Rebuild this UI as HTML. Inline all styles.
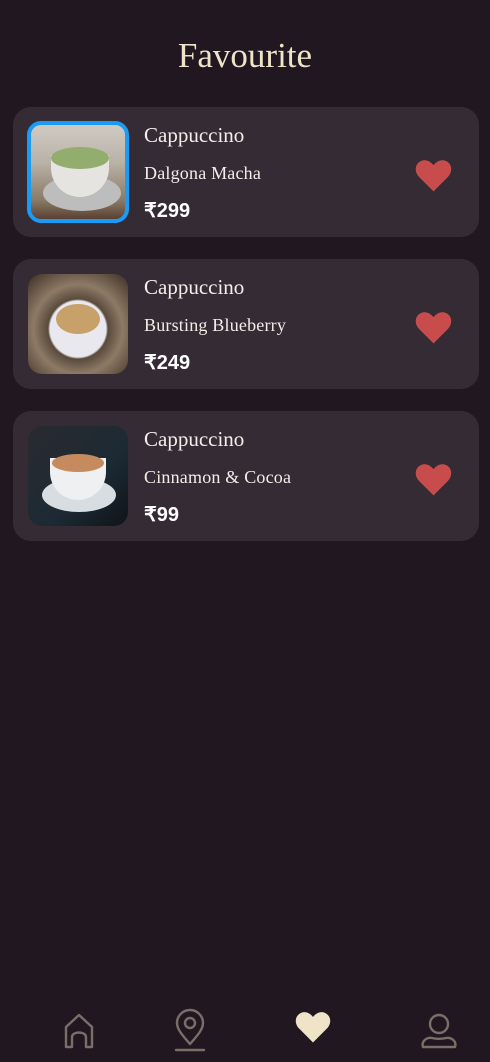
<!DOCTYPE html>
<html><head><meta charset="utf-8"><style>
body{margin:0;width:490px;height:1062px;background:#211720;position:relative;overflow:hidden;font-family:"Liberation Serif",serif}
h1{position:absolute;top:36px;left:0;width:490px;text-align:center;margin:0;font-weight:normal;font-size:35px;color:#efe3c8}
.card{position:absolute;left:13px;width:466px;height:130px;background:#352b34;border-radius:18px}
.img{position:absolute;left:15px;top:15px;width:100px;height:100px;border-radius:14px;overflow:hidden}
.t{position:absolute;left:131px;top:16px;color:#f4eee8;font-size:21px}
.s{position:absolute;left:131px;top:56px;color:#f4eee8;font-size:18px;letter-spacing:0.2px}
.p{position:absolute;left:131px;top:91px;color:#fff;font-size:20px;font-weight:bold;font-family:"Liberation Sans",sans-serif}
.h{position:absolute;left:401px;top:51px}
</style></head><body>
<h1>Favourite</h1>
<div class="card" style="top:107px">
 <div class="img" style="border:4px solid #1a9bf5;left:14px;top:14px;width:94px;height:94px;background:linear-gradient(#cfcac3,#b9b2a7 40%,#8a7a68 80%,#5a4030)">
  <div style="position:absolute;left:12px;top:50px;width:78px;height:36px;border-radius:50%;background:#bdbdbd"></div>
  <div style="position:absolute;left:20px;top:30px;width:58px;height:42px;border-radius:0 0 30px 30px;background:#e6e4e0"></div>
  <div style="position:absolute;left:20px;top:22px;width:58px;height:22px;border-radius:50%;background:#93ad6e"></div>
 </div>
 <div class="t">Cappuccino</div><div class="s">Dalgona Macha</div><div class="p">₹299</div>
 <svg class="h" width="39" height="35" viewBox="0 0 24 22"><path d="M12 21 L3 12 C0 9 0 4 4 2 C7 0.5 10 2 12 4.5 C14 2 17 0.5 20 2 C24 4 24 9 21 12 Z" fill="#c94c4c"/></svg>
</div>
<div class="card" style="top:259px">
 <div class="img" style="background:radial-gradient(circle at 50% 55%,#e8e8ee 0 28px,#5a4a3c 30px,#8d7a66 60%,#3b2c22)">
  <div style="position:absolute;left:28px;top:30px;width:44px;height:30px;border-radius:50%;background:#c7a06a"></div>
 </div>
 <div class="t">Cappuccino</div><div class="s">Bursting Blueberry</div><div class="p">₹249</div>
 <svg class="h" width="39" height="35" viewBox="0 0 24 22"><path d="M12 21 L3 12 C0 9 0 4 4 2 C7 0.5 10 2 12 4.5 C14 2 17 0.5 20 2 C24 4 24 9 21 12 Z" fill="#c94c4c"/></svg>
</div>
<div class="card" style="top:411px">
 <div class="img" style="background:linear-gradient(135deg,#2a2a30,#1c2a34 60%,#101418)">
  <div style="position:absolute;left:14px;top:52px;width:74px;height:34px;border-radius:50%;background:#d8dde2"></div>
  <div style="position:absolute;left:22px;top:32px;width:56px;height:42px;border-radius:0 0 28px 28px;background:#eef0f2"></div>
  <div style="position:absolute;left:24px;top:28px;width:52px;height:18px;border-radius:50%;background:#c58a5e"></div>
 </div>
 <div class="t">Cappuccino</div><div class="s">Cinnamon &amp; Cocoa</div><div class="p">₹99</div>
 <svg class="h" width="39" height="35" viewBox="0 0 24 22"><path d="M12 21 L3 12 C0 9 0 4 4 2 C7 0.5 10 2 12 4.5 C14 2 17 0.5 20 2 C24 4 24 9 21 12 Z" fill="#c94c4c"/></svg>
</div>
<svg style="position:absolute;left:0;top:1005px" width="490" height="50" fill="none" stroke="#7a6e68" stroke-width="2.4" stroke-linecap="round" stroke-linejoin="round">
 <path d="M66 42 V22 L79 10 L92 22 V42 H86 V32 C86 26 72 26 72 32 V42 Z"/>
 <path d="M190 39 C182 30 177 24 177 18 A13 13 0 0 1 203 18 C203 24 198 30 190 39 Z"/>
 <circle cx="190" cy="18" r="5"/>
 <path d="M176 45 H204"/>
 <circle cx="439" cy="19" r="9"/>
 <path d="M423 42 C421 36 427 32 432 33 C436 34 442 34 446 33 C451 32 457 36 455 42 Z"/>
</svg>
<svg style="position:absolute;left:294px;top:1010px" width="38" height="34" viewBox="0 0 24 22"><path d="M12 21 L3 12 C0 9 0 4 4 2 C7 0.5 10 2 12 4.5 C14 2 17 0.5 20 2 C24 4 24 9 21 12 Z" fill="#efe3c8"/></svg>
</body></html>
